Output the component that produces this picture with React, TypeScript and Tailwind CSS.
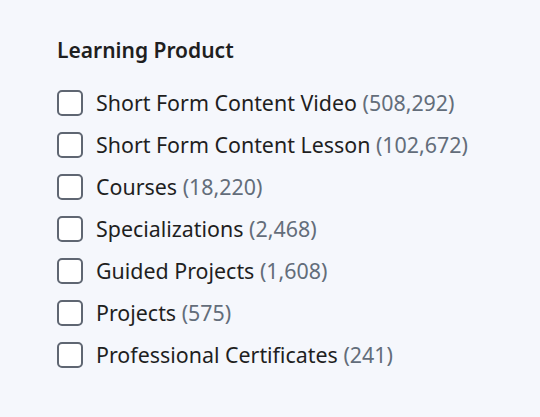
const items = [
  { label: 'Short Form Content Video', count: '508,292' },
  { label: 'Short Form Content Lesson', count: '102,672' },
  { label: 'Courses', count: '18,220' },
  { label: 'Specializations', count: '2,468' },
  { label: 'Guided Projects', count: '1,608' },
  { label: 'Projects', count: '575' },
  { label: 'Professional Certificates', count: '241' },
]

export default function App() {
  return (
    <div className="min-h-screen w-full bg-[#f5f7fc] pl-[57px] pt-[37px] font-['Noto_Sans',sans-serif]">
      <h3 className="text-[21px] leading-[26px] font-semibold text-[#1f1f1f]">Learning Product</h3>
      <ul className="mt-[27px] flex flex-col gap-[16px]">
        {items.map((item) => (
          <li key={item.label}>
            <label className="flex items-center gap-[13px] cursor-pointer">
              <span className="h-[26px] w-[26px] shrink-0 rounded-[5px] border-2 border-[#5f6672] bg-white" />
              <span className="text-[21.4px] leading-[26px] text-[#1f1f1f]">
                {item.label} <span className="text-[#636d7a]">({item.count})</span>
              </span>
            </label>
          </li>
        ))}
      </ul>
    </div>
  )
}
